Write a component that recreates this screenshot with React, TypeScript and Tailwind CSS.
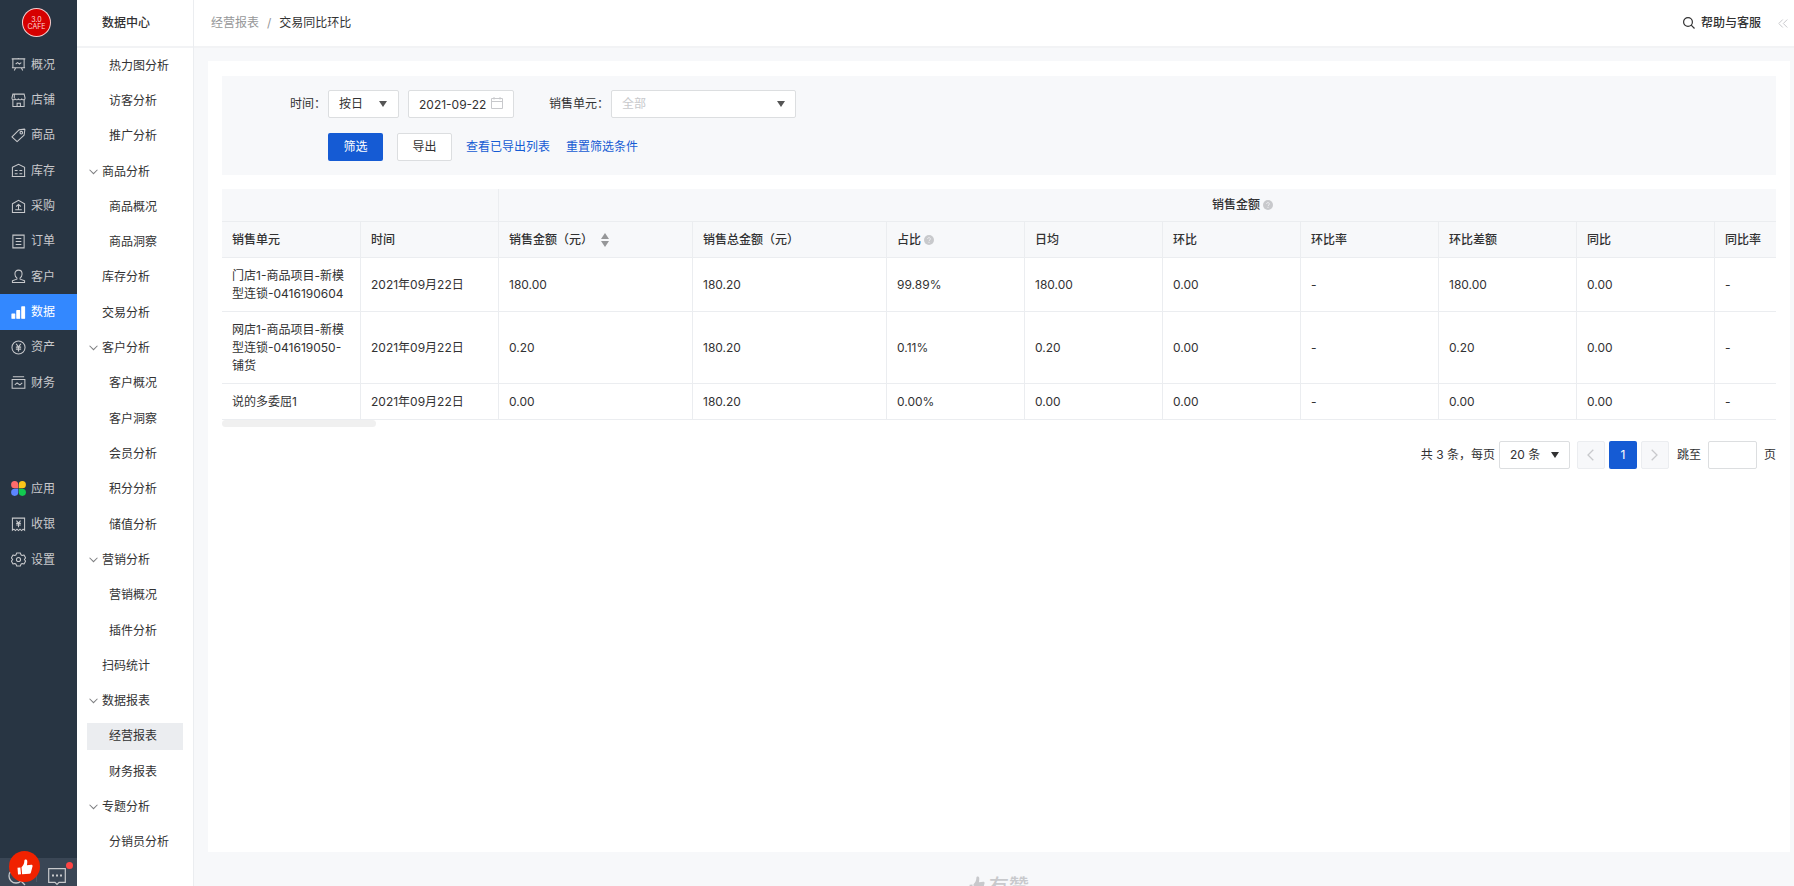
import React from 'react';

type NavItem = { label: string; icon: React.ReactNode; active?: boolean; className?: string };
type SubItem = { label: string; level: 'group' | 'root' | 'leaf'; active?: boolean };

const Icon: React.FC<{ children: React.ReactNode }> = ({ children }) => (
  <svg viewBox="0 0 16 16" className="w-[15px] h-[15px] shrink-0" fill="none" stroke="currentColor" strokeWidth="1.1" aria-hidden="true">
    {children}
  </svg>
);

const navItems: NavItem[] = [
  {
    label: '概况',
    icon: <Icon><path d="M.8 2h14.4M2 2v9.5h12V2M1 11.5h14M5 11.500l-1.500 3M11 11.500l1.500 3M7.800 1v1M5 7.500l2-1.500 2 1.500 2-1.500" /></Icon>,
  },
  {
    label: '店铺',
    icon: <Icon><path d="M2 1.200h12l1 4.300c0 2.300-3.400 2.300-3.600.3-.2 2-3.300 2-3.500 0-.2 2-3.300 2-3.500 0C4.200 7.800 1 7.800 1 5.500zM2 7.500v7h12v-7M3.500 1.500v4M6.500 14.500v-3.500h3.500v3.500" /></Icon>,
  },
  {
    label: '商品',
    icon: <Icon><path d="M1 9.500 8.500 2l6-.8.3.3-.8 6L6.500 14.500z" strokeLinejoin="round" /><circle cx="11" cy="5" r="1.400" /></Icon>,
  },
  {
    label: '库存',
    icon: <Icon><path d="M1.500 4.500 8 1.500l6.500 3v10h-13zM4 8h3M9 8h3M4 11.500h3M9 11.500h3M.8 14.500h14.400" /></Icon>,
  },
  {
    label: '采购',
    icon: <Icon><path d="M1.500 5 8 1.500 14.500 5v9.500h-13zM8 6v5M5.500 8 8 5.800 10.500 8M4.500 11.500h7" /></Icon>,
  },
  {
    label: '订单',
    icon: <Icon><path d="M2 1.200h12v13.600H2zM5 4.800h6M5 8h6M5 11.200h6" /></Icon>,
  },
  {
    label: '客户',
    icon: <Icon><path d="M6.300 9.500C4.800 8.500 4.200 7 4.200 5.200 4.200 2.800 5.800 1.200 8 1.200s3.800 1.600 3.800 4c0 1.800-.6 3.300-2.100 4.300v1.300l4.800 1.700v2h-13v-2l4.800-1.700z" strokeLinejoin="round" /></Icon>,
  },
  {
    label: '数据',
    active: true,
    icon: <Icon><path d="M1 9.500h3V14H1zM6.200 6h3v8h-3zM11.500 2h3v12h-3z" fill="currentColor" strokeLinejoin="round" /></Icon>,
  },
  {
    label: '资产',
    icon: <Icon><circle cx="8" cy="8" r="7" /><path d="M5.500 4 8 7.500 10.500 4M5.200 7.700h5.600M5.200 9.800h5.600M8 7.500v4.800" strokeWidth="1.300" /></Icon>,
  },
  {
    label: '财务',
    icon: <Icon><path d="M2 1.800h12M1.200 4.800h13.600v9.400H1.200zM4 10.500l2.500-2 3 2 2.500-2" /></Icon>,
  },
  {
    label: '应用',
    className: 'row-start-13',
    icon: (
      <svg viewBox="0 0 16 16" className="w-[15px] h-[15px] shrink-0" aria-hidden="true">
        <path d="M7.700 7.700H3.900A3.800 3.800 0 1 1 7.700 3.900z" fill="#ff6b6b" />
        <path d="M8.300 7.700V3.900a3.800 3.800 0 1 1 3.800 3.800z" fill="#fcc419" />
        <path d="M7.700 8.300v3.800a3.800 3.800 0 1 1-3.800-3.800z" fill="#5c85ff" />
        <path d="M8.300 8.300h3.800a3.800 3.800 0 1 1-3.800 3.800z" fill="#12c950" />
      </svg>
    ),
  },
  {
    label: '收银',
    className: 'row-start-14',
    icon: <Icon><path d="M1.500 1.200h13v13l-1.600-1.200-1.600 1.500-1.700-1.500L8 14.500 6.400 13l-1.700 1.500L3.100 13l-1.600 1.200zM5.800 3.800 8 6.500l2.200-2.700M5.500 6.800h5M5.500 8.600h5M8 6.500V11" /></Icon>,
  },
  {
    label: '设置',
    className: 'row-start-15',
    icon: <Icon><path d="M6 1h4l.6 2 1.300.8 2-.5 1.700 3-1.400 1.700 1.400 1.700-1.700 3-2-.5-1.300.8-.6 2H6l-.6-2-1.300-.8-2 .5-1.700-3L1.800 8 .4 6.300l1.700-3 2 .5L5.400 3z" strokeLinejoin="round" /><circle cx="8" cy="8" r="2.200" /></Icon>,
  },
];

const subItems: SubItem[] = [
  { label: '热力图分析', level: 'leaf' },
  { label: '访客分析', level: 'leaf' },
  { label: '推广分析', level: 'leaf' },
  { label: '商品分析', level: 'group' },
  { label: '商品概况', level: 'leaf' },
  { label: '商品洞察', level: 'leaf' },
  { label: '库存分析', level: 'root' },
  { label: '交易分析', level: 'root' },
  { label: '客户分析', level: 'group' },
  { label: '客户概况', level: 'leaf' },
  { label: '客户洞察', level: 'leaf' },
  { label: '会员分析', level: 'leaf' },
  { label: '积分分析', level: 'leaf' },
  { label: '储值分析', level: 'leaf' },
  { label: '营销分析', level: 'group' },
  { label: '营销概况', level: 'leaf' },
  { label: '插件分析', level: 'leaf' },
  { label: '扫码统计', level: 'root' },
  { label: '数据报表', level: 'group' },
  { label: '经营报表', level: 'leaf', active: true },
  { label: '财务报表', level: 'leaf' },
  { label: '专题分析', level: 'group' },
  { label: '分销员分析', level: 'leaf' },
];

const columns = ['销售单元', '时间', '销售金额（元）', '销售总金额（元）', '占比', '日均', '环比', '环比率', '环比差额', '同比', '同比率'];

const rows = [
  ['门店1-商品项目-新模型连锁-0416190604', '2021年09月22日', '180.00', '180.20', '99.89%', '180.00', '0.00', '-', '180.00', '0.00', '-'],
  ['网店1-商品项目-新模型连锁-041619050-铺货', '2021年09月22日', '0.20', '180.20', '0.11%', '0.20', '0.00', '-', '0.20', '0.00', '-'],
  ['说的多委屈1', '2021年09月22日', '0.00', '180.20', '0.00%', '0.00', '0.00', '-', '0.00', '0.00', '-'],
];

const ThumbIcon: React.FC<{ className: string }> = ({ className }) => (
  <svg viewBox="0 0 16 16" className={className} fill="currentColor" aria-hidden="true">
    <path d="M.5 8.800 3.400 8.400 4 15.200 1 15.500zM4.500 8.200C6.500 6.500 7.300 4.500 7.400 1.500 7.400.1 9.800-.2 10.200 1.800c.2 1.400 0 2.900-.3 4.400l4.400-.4c1 0 1.500.8 1.200 1.700l-1.600 6c-.2.800-.7 1.200-1.500 1.300l-7.300.5z" />
  </svg>
);

const Caret: React.FC<{ className: string }> = ({ className }) => (
  <svg viewBox="0 0 8 6" className={`pointer-events-none absolute top-[11px] w-2 h-1.5 ${className}`} fill="currentColor" aria-hidden="true">
    <path d="M0 0h8L4 6z" />
  </svg>
);

const HelpDot: React.FC = () => (
  <svg viewBox="0 0 10 10" className="mb-0.5 ml-[3px] inline-block w-2.5 h-2.5" aria-hidden="true">
    <circle cx="5" cy="5" r="5" fill="#c8c9cc" />
    <path d="M3.600 4c0-2 2.900-1.800 2.800 0C6.400 5 5 5 5 6.200M5 7v1" stroke="#f2f3f5" strokeWidth=".8" fill="none" />
  </svg>
);

const MainNav: React.FC = () => (
  <nav className="relative flex w-[77px] shrink-0 flex-col bg-[#283543] text-[#c8c9cc]">
    <div className="flex h-[47px] shrink-0 pt-2 pl-[22px]">
      <div className="flex h-[29px] w-[29px] flex-col items-center justify-center rounded-full border border-white/80 bg-[#d60000] text-[7px] leading-[7px] text-[#ffd8d8]">
        <span>3.0</span>
        <span>CAFE</span>
      </div>
    </div>
    <ul className="grid flex-1 grid-rows-[repeat(23,minmax(0,1fr))] pb-[26px]">
      {navItems.map((item) => (
        <li key={item.label} className={item.className}>
          <a
            href="#"
            className={`flex h-full items-center gap-[5px] pl-[11px] ${item.active ? 'bg-[#3388ff] text-white' : ''}`}
          >
            {item.icon}
            {item.label}
          </a>
        </li>
      ))}
    </ul>
    <div className="absolute inset-x-0 bottom-0 h-7 bg-[#3a4655]">
      <button type="button" aria-label="搜索" className="absolute top-2.5 left-2">
        <svg viewBox="0 0 18 18" className="w-[18px] h-[18px]" fill="none" stroke="currentColor" strokeWidth="1.300">
          <circle cx="8" cy="8" r="7" />
          <path d="m13 13 4 4" />
        </svg>
      </button>
      <span className="absolute top-2 left-9 h-4 w-px bg-[#4c5866]" />
      <button type="button" aria-label="消息" className="absolute top-2.5 left-12">
        <svg viewBox="0 0 18 18" className="w-[18px] h-[18px]" fill="none" stroke="currentColor" strokeWidth="1.200">
          <path d="M.7.700h16.600v13.600H11l-2 2-2-2H.7z" />
          <path d="M4 7.500h2M8 7.500h2M12 7.500h2" strokeWidth="2" />
        </svg>
      </button>
      <span className="absolute top-1 left-[66px] h-[7px] w-[7px] rounded-full bg-[#ff4444]" />
      <span className="absolute -top-[7px] left-[9px] flex h-[31px] w-[31px] items-center justify-center rounded-full bg-[#f02200] text-white">
        <ThumbIcon className="w-4 h-4" />
      </span>
    </div>
  </nav>
);

const SubNav: React.FC = () => (
  <nav className="flex w-[117px] shrink-0 flex-col border-r border-[#ebedf0] bg-white">
    <h2 className="h-12 shrink-0 border-b-2 border-[#f2f3f5] pl-[25px] text-xs leading-[46px] font-medium">数据中心</h2>
    <ul className="grid flex-1 grid-rows-[repeat(23,minmax(0,1fr))] pb-[26px]">
      {subItems.map((item) => (
        <li key={item.label} className="flex items-center px-2.5">
          <a
            href="#"
            className={`flex h-[27px] w-full items-center ${item.level === 'leaf' ? 'pl-[22px]' : ''} ${
              item.level === 'root' ? 'pl-[15px]' : ''
            } ${item.active ? 'bg-[#ebedf0]' : ''}`}
          >
            {item.level === 'group' && (
              <svg viewBox="0 0 8 5" className="ml-0.5 mr-1 w-[9px] h-[6px] text-[#7d7e80]" fill="none" stroke="currentColor" strokeWidth=".9" aria-hidden="true">
                <path d="m.5.5 3.500 3.500L7.500.5" />
              </svg>
            )}
            {item.label}
          </a>
        </li>
      ))}
    </ul>
  </nav>
);

const TopBar: React.FC = () => (
  <header className="flex h-12 shrink-0 items-center border-b-2 border-[#f2f3f5] bg-white pr-1.5 pl-[17px]">
    <a href="#" className="text-[#969799]">经营报表</a>
    <span className="mx-2 text-[#969799]">/</span>
    <span>交易同比环比</span>
    <a href="#" className="ml-auto flex items-center gap-1.5 font-medium">
      <svg viewBox="0 0 12 12" className="w-3 h-3" fill="none" stroke="currentColor" strokeWidth="1.200" aria-hidden="true">
        <circle cx="5" cy="5" r="4.400" />
        <path d="m8.200 8.200 3.300 3.300" />
      </svg>
      帮助与客服
    </a>
    <button type="button" aria-label="收起" className="ml-[17px] text-[#c8c9cc]">
      <svg viewBox="0 0 10 9" className="w-2.5 h-[9px]" fill="none" stroke="currentColor">
        <path d="M4.800.5.800 4.500l4 4M9.300.5l-4 4 4 4" />
      </svg>
    </button>
  </header>
);

const Filters: React.FC = () => (
  <form className="bg-[#f7f8fa] py-3.5">
    <div className="flex items-center">
      <label htmlFor="unit" className="w-[106px] pr-0.5 text-right">时间：</label>
      <div className="relative">
        <select id="unit" className="h-7 w-[71px] appearance-none rounded-xs border border-[#dcdee0] bg-white pl-2.5">
          <option>按日</option>
        </select>
        <Caret className="right-3 text-[#555]" />
      </div>
      <div className="relative ml-[9px]">
        <input
          type="text"
          aria-label="日期"
          defaultValue="2021-09-22"
          className="h-7 w-[106px] rounded-xs border border-[#dcdee0] bg-white pl-2.5"
        />
        <svg viewBox="0 0 12 12" className="absolute top-[7px] right-[11px] h-3 w-3 text-[#c8c9cc]" fill="none" stroke="currentColor" aria-hidden="true">
          <path d="M.5 1.500h11v10H.5zM.5 4.500h11M3 0v2.500M9 0v2.500" />
        </svg>
      </div>
      <label htmlFor="shop" className="w-[97px] pr-0.5 text-right">销售单元：</label>
      <div className="relative">
        <select id="shop" className="h-7 w-[185px] appearance-none rounded-xs border border-[#dcdee0] bg-white pl-2.5 text-[#c8c9cc]">
          <option>全部</option>
        </select>
        <Caret className="right-[11px] text-[#555]" />
      </div>
    </div>
    <div className="mt-[15px] flex items-center pl-[106px]">
      <button type="button" className="h-7 w-[55px] rounded-xs bg-[#155bd4] text-white">筛选</button>
      <button type="button" className="ml-3.5 h-7 w-[55px] rounded-xs border border-[#dcdee0] bg-white">导出</button>
      <a href="#" className="ml-3.5 text-[#155bd4]">查看已导出列表</a>
      <a href="#" className="ml-4 text-[#155bd4]">重置筛选条件</a>
    </div>
  </form>
);

const ReportTable: React.FC = () => (
  <div className="mt-3.5 overflow-hidden">
    <table className="w-[1768px] table-fixed border-separate border-spacing-0 text-left leading-[18px]">
      <colgroup>
        <col className="w-[139px]" />
        <col className="w-[138px]" />
        <col className="w-[194px]" />
        <col className="w-[194px]" />
        <col span={6} className="w-[138px]" />
        <col className="w-[275px]" />
      </colgroup>
      <thead className="bg-[#f7f8fa]">
        <tr>
          <th colSpan={2} className="h-[33px] border-r border-b border-[#ebedf0]" />
          <th colSpan={9} className="border-b border-[#ebedf0] pr-1 text-center font-medium">
            销售金额
            <HelpDot />
          </th>
        </tr>
        <tr>
          {columns.map((col) => (
            <th key={col} className="border-r border-b border-[#ebedf0] pt-[9px] pr-2 pb-2 pl-2.5 font-medium whitespace-nowrap">
              {col}
              {col === '占比' && <HelpDot />}
              {col === '销售金额（元）' && (
                <svg viewBox="0 0 8 14" className="mb-0.5 ml-2 inline-block h-3.5 w-2 text-[#969799]" fill="currentColor" aria-hidden="true">
                  <path d="M4 0l4 6H0zM0 8h8l-4 6z" />
                </svg>
              )}
            </th>
          ))}
        </tr>
      </thead>
      <tbody>
        {rows.map((row) => (
          <tr key={row[0]}>
            {row.map((cell, i) => (
              <td key={columns[i]} className="border-r border-b border-[#ebedf0] pt-[9px] pr-2 pb-2 pl-2.5 break-words">
                {cell}
              </td>
            ))}
          </tr>
        ))}
      </tbody>
    </table>
    <div className="h-[7px] w-[154px] rounded-sm bg-[#f0f0f0]" />
  </div>
);

const Pagination: React.FC = () => (
  <div className="mt-3.5 flex items-center justify-end">
    <label htmlFor="page-size">共 3 条，每页</label>
    <div className="relative ml-1">
      <select id="page-size" className="h-7 w-[71px] appearance-none rounded-xs border border-[#dcdee0] bg-white pl-2.5">
        <option>20 条</option>
      </select>
      <Caret className="right-[11px] text-[#323233]" />
    </div>
    <div className="ml-[7px] flex gap-1">
      <button type="button" aria-label="上一页" className="flex h-7 w-7 items-center justify-center rounded-xs border border-[#ebedf0] bg-[#f7f8fa] text-[#c8c9cc]">
        <svg viewBox="0 0 7 12" className="w-[7px] h-3" fill="none" stroke="currentColor" strokeWidth="1.300">
          <path d="M6.300.7 1 6l5.300 5.300" />
        </svg>
      </button>
      <button type="button" className="h-7 w-7 rounded-xs bg-[#155bd4] text-white">1</button>
      <button type="button" aria-label="下一页" className="flex h-7 w-7 items-center justify-center rounded-xs border border-[#ebedf0] bg-[#f7f8fa] text-[#c8c9cc]">
        <svg viewBox="0 0 7 12" className="w-[7px] h-3" fill="none" stroke="currentColor" strokeWidth="1.300">
          <path d="M.7.7 6 6 .7 11.300" />
        </svg>
      </button>
    </div>
    <label htmlFor="jump" className="ml-2">跳至</label>
    <input id="jump" type="text" className="mx-[7px] h-7 w-[49px] rounded-xs border border-[#dcdee0] bg-white px-2" />
    <span>页</span>
  </div>
);

const App: React.FC = () => {
  return (
    <div className="flex h-screen overflow-hidden bg-[#f7f8fa] font-[Inter,'Noto_Sans_CJK_SC',sans-serif] text-xs text-[#323233]">
      <MainNav />
      <SubNav />
      <div className="flex min-w-0 flex-1 flex-col">
        <TopBar />
        <main className="flex min-h-0 flex-1 flex-col pt-[13px] pr-1 pl-3.5">
          <section className="flex-1 bg-white p-3.5 pt-[15px]">
            <Filters />
            <ReportTable />
            <Pagination />
          </section>
          <footer className="flex h-[34px] shrink-0 justify-center gap-1 overflow-hidden pt-6 text-xl leading-[22px] font-medium text-[#c8c9cc]">
            <ThumbIcon className="w-4 h-4 shrink-0" />
            有赞
          </footer>
        </main>
      </div>
    </div>
  );
};

export default App;
